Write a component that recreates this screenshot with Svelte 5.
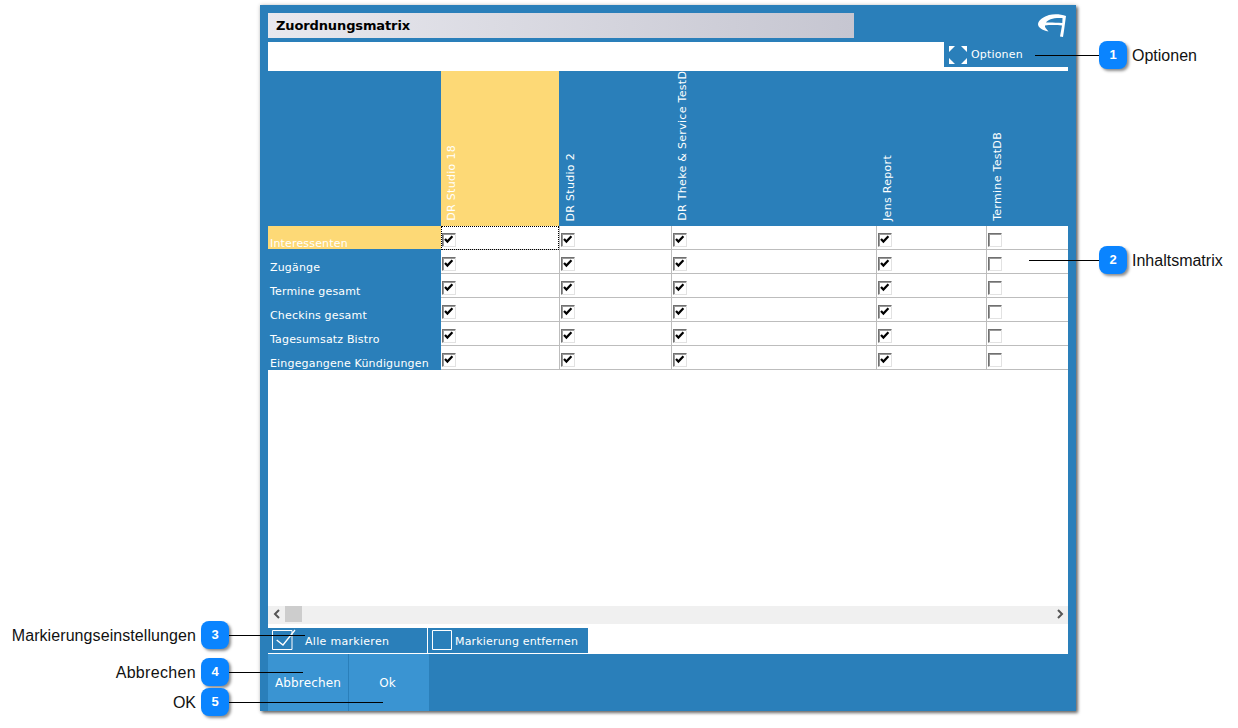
<script lang="ts">
  const columns = [
    { name: "DR Studio 18", width: 118, on: true },
    { name: "DR Studio 2", width: 112, on: true },
    { name: "DR Theke & Service TestDB", width: 205, on: true },
    { name: "Jens Report", width: 110, on: true },
    { name: "Termine TestDB", width: 82, on: false },
  ];

  const rows = [
    "Interessenten",
    "Zugänge",
    "Termine gesamt",
    "Checkins gesamt",
    "Tagesumsatz Bistro",
    "Eingegangene Kündigungen",
  ];

  const gridTemplate = `173px ${columns.map((c) => c.width + "px").join(" ")}`;

  // callouts sit on top of the screenshot, coordinates are the content here
  const callouts = [
    { n: 1, label: "Optionen", top: 41, left: 1099, side: "right", lineFrom: 1035, spacing: 0 },
    { n: 2, label: "Inhaltsmatrix", top: 246, left: 1099, side: "right", lineFrom: 1029, spacing: 0 },
    { n: 3, label: "Markierungseinstellungen", top: 621, left: 201, side: "left", lineTo: 305, spacing: 0.08 },
    { n: 4, label: "Abbrechen", top: 658, left: 201, side: "left", lineTo: 303, spacing: 0.33 },
    { n: 5, label: "OK", top: 688, left: 201, side: "left", lineTo: 383, spacing: 0 },
  ];
</script>

{#snippet checkbox(on)}
  <span class="cb">
    {#if on}
      <svg width="12" height="12" viewBox="0 0 12 12" aria-hidden="true">
        <path d="M2 5 L4.4 7.6 L9.4 2.2" fill="none" stroke="#000" stroke-width="2.2" />
      </svg>
    {/if}
  </span>
{/snippet}

<div class="page">
  <div class="window">
    <div class="titlerow">
      <div class="title">Zuordnungsmatrix</div>
      <svg class="logo" width="31" height="25" viewBox="0 0 31 25" aria-hidden="true">
        <path
          d="M29 3 C24 1 17 .5 12 2 C7 3.5 1.5 7 1 11 C1 14.5 5 17 11.5 18.5 C9 15.5 7.5 14 8 12.5 C12 12 19 11.8 25 12.5 L23 23.5 L26 24 C27 18 28 10 29 3 Z M9 9.5 C11 6.5 16 4.5 25.5 5 L25.3 10 C19 9.5 13 9.3 9 9.5 Z"
          fill="#fff"
          fill-rule="evenodd"
        />
      </svg>
    </div>

    <div class="optionrow">
      <div class="options">
        <svg width="20" height="20" viewBox="0 0 20 20" aria-hidden="true">
          <path d="M1 1h6L4 4v0L1 7zM19 1h-6l3 3 3 3zM1 19h6l-3-3-3-3zM19 19h-6l3-3 3-3z" fill="#fff" />
        </svg>
        <span>Optionen</span>
      </div>
    </div>

    <div class="matrix">
      <div class="grid head" style="grid-template-columns: {gridTemplate}">
        <div></div>
        {#each columns as col, i}
          <div class="colhead" class:active={i === 0}>
            <span>{col.name}</span>
          </div>
        {/each}
      </div>

      {#each rows as row, r}
        <div class="grid" style="grid-template-columns: {gridTemplate}">
          <div class="rowlabel" class:active={r === 0}>{row}</div>
          {#each columns as col, c}
            <div class="cell" class:first={c === 0} class:focus={r === 0 && c === 0}>
              {@render checkbox(col.on)}
            </div>
          {/each}
        </div>
      {/each}
    </div>

    <div class="scrollbar">
      <span class="arrow">
        <svg width="8" height="10" viewBox="0 0 8 10" aria-hidden="true">
          <path d="M6 1 L2 5 L6 9" fill="none" stroke="#555" stroke-width="2" />
        </svg>
      </span>
      <span class="thumb"></span>
      <span class="arrow end">
        <svg width="8" height="10" viewBox="0 0 8 10" aria-hidden="true">
          <path d="M2 1 L6 5 L2 9" fill="none" stroke="#555" stroke-width="2" />
        </svg>
      </span>
    </div>

    <div class="marks">
      <button class="mark all">
        <svg width="26" height="24" viewBox="0 0 26 24" aria-hidden="true">
          <path d="M1.5 2.5h19.5v19h-19.5z" fill="none" stroke="#fff" />
          <path d="M5.7 12 L12 17 L24 2" fill="none" stroke="#fff" stroke-width="1.3" />
        </svg>
        <span>Alle markieren</span>
      </button>
      <button class="mark none">
        <svg width="20" height="20" viewBox="0 0 20 20" aria-hidden="true">
          <path d="M.5.5h19v19H.5z" fill="none" stroke="#fff" />
        </svg>
        <span>Markierung entfernen</span>
      </button>
    </div>

    <div class="actions">
      <button class="action">Abbrechen</button>
      <button class="action ok">Ok</button>
    </div>
  </div>

  {#each callouts as c}
    {#if c.side === "right"}
      <span class="line" style="top: {c.top + 14}px; left: {c.lineFrom}px; width: {c.left - c.lineFrom}px"></span>
      <span class="callout-label" style="top: {c.top + 5}px; left: {c.left + 33}px">{c.label}</span>
    {:else}
      <span class="line" style="top: {c.top + 14}px; left: {c.left + 28}px; width: {c.lineTo - c.left - 28}px"></span>
      <span
        class="callout-label"
        style="top: {c.top + 5}px; right: {1238 - c.left + 5}px; letter-spacing: {c.spacing}px"
      >
        {c.label}
      </span>
    {/if}
    <span class="badge" style="top: {c.top}px; left: {c.left}px">{c.n}</span>
  {/each}
</div>

<style>
  :global(body) {
    background: #fff;
  }

  .page {
    position: relative;
    width: 1238px;
    height: 728px;
    overflow: hidden;
    padding: 5px 0 0 260px;
    box-sizing: border-box;
    font-family: "DejaVu Sans", Verdana, sans-serif;
    font-size: 11px;
    letter-spacing: 0.17px;
    color: #fff;
  }

  .window {
    width: 816px;
    height: 706px;
    box-sizing: border-box;
    padding: 8px 8px 0;
    background: #2a7fba;
    display: flex;
    flex-direction: column;
    box-shadow:
      2px 2px 3px rgba(0, 0, 0, 0.55),
      0 0 4px rgba(0, 0, 0, 0.2);
  }

  .titlerow {
    height: 25px;
    margin-bottom: 4px;
    display: flex;
    justify-content: space-between;
    flex-shrink: 0;
  }

  .title {
    width: 586px;
    box-sizing: border-box;
    padding-left: 8px;
    line-height: 25px;
    font-size: 13px;
    font-weight: 700;
    letter-spacing: -0.12px;
    color: #000;
    background: linear-gradient(90deg, #e8e8ee, #c6c6d1);
  }

  .optionrow {
    height: 29px;
    background: #fff;
    display: flex;
    justify-content: flex-end;
    flex-shrink: 0;
  }

  .options {
    width: 124px;
    height: 25px;
    box-sizing: border-box;
    padding-left: 4px;
    background: #2a7fba;
    display: flex;
    align-items: center;
    gap: 3px;
  }

  .matrix {
    flex: 1;
    background: #fff;
  }

  .grid {
    display: grid;
    height: 24px;
    grid-template-rows: 24px;
  }

  .grid.head {
    height: 155px;
    grid-template-rows: 155px;
    background: #2a7fba;
  }

  .colhead {
    overflow: hidden;
    display: flex;
    justify-content: flex-start;
    align-items: flex-end;
    padding: 0 0 5px 6px;
    min-width: 0;
  }

  .colhead.active {
    padding-left: 5px;
  }

  .colhead span {
    writing-mode: vertical-rl;
    transform: rotate(180deg);
    white-space: nowrap;
    line-height: 12px;
    letter-spacing: 0.3px;
  }

  .colhead.active,
  .rowlabel.active {
    background: #fdd976;
  }

  .rowlabel {
    background: #2a7fba;
    padding: 11px 0 0 2px;
    white-space: nowrap;
    line-height: 14px;
    box-sizing: border-box;
  }

  .rowlabel.active {
    height: 23px;
    box-shadow: 0 1px 0 #2a7fba;
  }

  .cell {
    box-sizing: border-box;
    border-left: 1px solid #bdbdbd;
    border-bottom: 1px solid #bdbdbd;
    padding: 7px 0 0 1px;
  }

  .cell.first {
    border-left: 0;
    padding-left: 1px;
  }

  .cell.focus {
    outline: 1px dotted #000;
    outline-offset: -1px;
  }

  .cb {
    display: block;
    width: 14px;
    height: 14px;
    box-sizing: border-box;
    background: #fff;
    border: 1px solid;
    border-color: #707070 #e2e2e2 #e2e2e2 #707070;
    box-shadow: inset 1px 1px 0 #999;
  }

  .cb svg {
    display: block;
  }

  .scrollbar {
    height: 18px;
    flex-shrink: 0;
    background: #f0f0f0;
    display: flex;
    align-items: flex-start;
  }

  .arrow {
    width: 17px;
    height: 16px;
    display: flex;
    align-items: center;
    justify-content: center;
  }

  .arrow.end {
    margin-left: auto;
  }

  .thumb {
    width: 17px;
    height: 16px;
    background: #cdcdcd;
  }

  .marks {
    height: 30px;
    flex-shrink: 0;
    box-sizing: border-box;
    padding: 4px 0 1px;
    background: #fff;
    display: flex;
    gap: 1px;
  }

  .mark {
    height: 25px;
    border: 0;
    padding: 0;
    background: #2a7fba;
    color: #fff;
    font: inherit;
    letter-spacing: inherit;
    display: flex;
    align-items: center;
    text-align: left;
    overflow: visible;
  }

  .mark span {
    padding-top: 2px;
  }

  .mark.all {
    width: 159px;
    padding-left: 3px;
    gap: 8px;
    letter-spacing: 0.3px;
  }

  .mark.all svg {
    align-self: flex-start;
  }

  .mark.none {
    width: 160px;
    padding-left: 4px;
    gap: 3px;
  }

  .mark.none svg {
    margin-top: -1px;
  }

  .actions {
    height: 57px;
    flex-shrink: 0;
    display: flex;
    gap: 1px;
  }

  .action {
    width: 80px;
    border: 0;
    padding: 0;
    background: #3a94d2;
    color: #fff;
    font: inherit;
    font-size: 12px;
    letter-spacing: inherit;
  }

  .action.ok {
    padding-right: 3px;
  }

  .line {
    position: absolute;
    height: 1px;
    background: #000;
  }

  .badge {
    position: absolute;
    width: 28px;
    height: 28px;
    border-radius: 8px;
    background: #0a84ff;
    color: #fff;
    font-family: "Liberation Sans", Arial, sans-serif;
    font-size: 13px;
    font-weight: 700;
    line-height: 28px;
    letter-spacing: 0;
    text-align: center;
    box-shadow: 2px 2px 3px rgba(0, 0, 0, 0.45);
  }

  .callout-label {
    position: absolute;
    font-family: "Liberation Sans", Arial, sans-serif;
    font-size: 16px;
    line-height: 20px;
    letter-spacing: 0;
    color: #111;
    white-space: nowrap;
  }
</style>
